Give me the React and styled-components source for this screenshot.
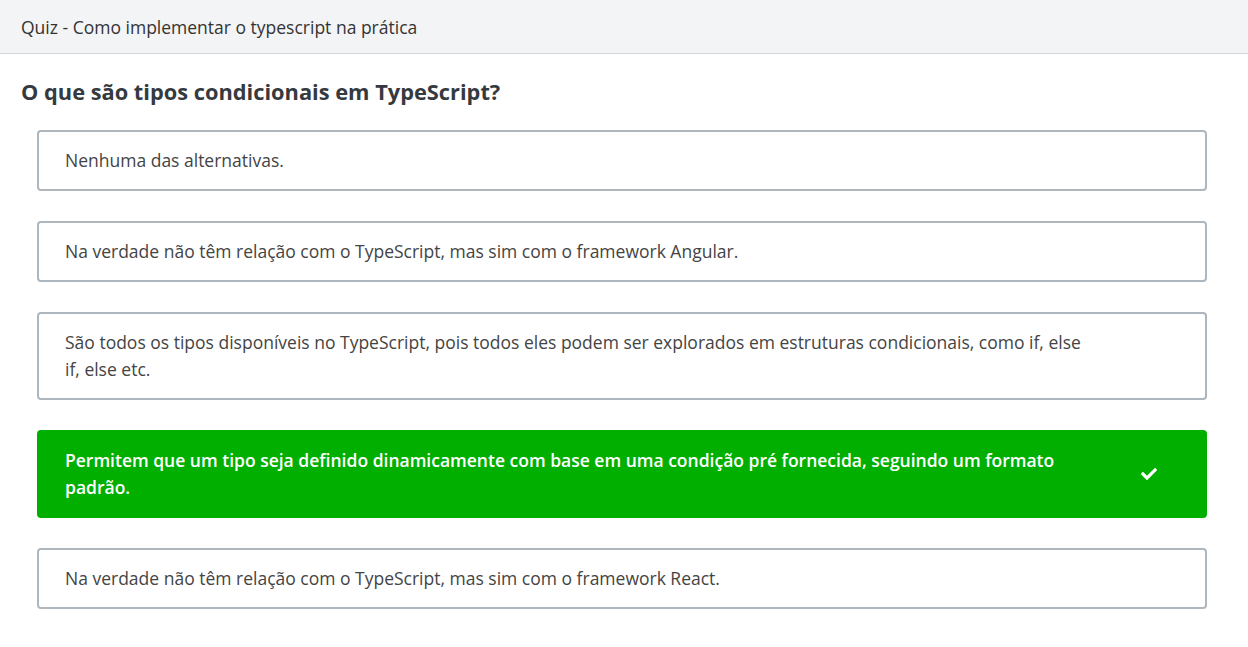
import styled, { createGlobalStyle } from "styled-components";
import { FaCheck } from "react-icons/fa";

const options = [
  { text: "Nenhuma das alternativas." },
  {
    text: "Na verdade não têm relação com o TypeScript, mas sim com o framework Angular.",
  },
  {
    text: "São todos os tipos disponíveis no TypeScript, pois todos eles podem ser explorados em estruturas condicionais, como if, else if, else etc.",
  },
  {
    text: "Permitem que um tipo seja definido dinamicamente com base em uma condição pré fornecida, seguindo um formato padrão.",
    correct: true,
  },
  {
    text: "Na verdade não têm relação com o TypeScript, mas sim com o framework React.",
  },
];

const App = () => {
  return (
    <Page>
      <GlobalStyle />
      <Header>Quiz - Como implementar o typescript na prática</Header>
      <Main>
        <Question>O que são tipos condicionais em TypeScript?</Question>
        <List>
          {options.map((opt, i) => (
            <Option key={i} $correct={opt.correct}>
              <OptionText>{opt.text}</OptionText>
              <IconBox>{opt.correct && <FaCheck size={16} />}</IconBox>
            </Option>
          ))}
        </List>
      </Main>
    </Page>
  );
};

const GlobalStyle = createGlobalStyle`
  * {
    box-sizing: border-box;
  }

  body {
    margin: 0;
    background: #fff;
    font-family: "Open Sans", "Noto Sans", sans-serif;
  }
`;

const Page = styled.div`
  min-height: 647px;
`;

const Header = styled.header`
  height: 54px;
  display: flex;
  align-items: center;
  padding: 0 21px;
  background: #f3f4f6;
  border-bottom: 1px solid #d3d5d8;
  font-size: 17.5px;
  color: #333;
`;

const Main = styled.main`
  padding: 23px 21px 0;
`;

const Question = styled.h2`
  margin: 0 0 23px;
  font-size: 21.8px;
  line-height: 30px;
  font-weight: 700;
  color: #343a40;
`;

const List = styled.ul`
  list-style: none;
  margin: 0;
  padding: 0 20px 0 16px;
  display: flex;
  flex-direction: column;
  gap: 30.5px;
`;

const Option = styled.li`
  display: flex;
  align-items: center;
  padding: 14.75px 26px;
  border: 2px solid ${({ $correct }) => ($correct ? "#00af00" : "#aeb6be")};
  border-radius: 4px;
  background: ${({ $correct }) => ($correct ? "#00af00" : "#fff")};
  color: ${({ $correct }) => ($correct ? "#fff" : "#444")};
  font-size: 17.5px;
  line-height: 27px;
  font-weight: ${({ $correct }) => ($correct ? 600 : 400)};
`;

const OptionText = styled.span`
  flex: 1;
`;

const IconBox = styled.span`
  width: 60px;
  margin-left: 35px;
  display: flex;
  justify-content: center;
  align-items: center;
`;

export default App;
